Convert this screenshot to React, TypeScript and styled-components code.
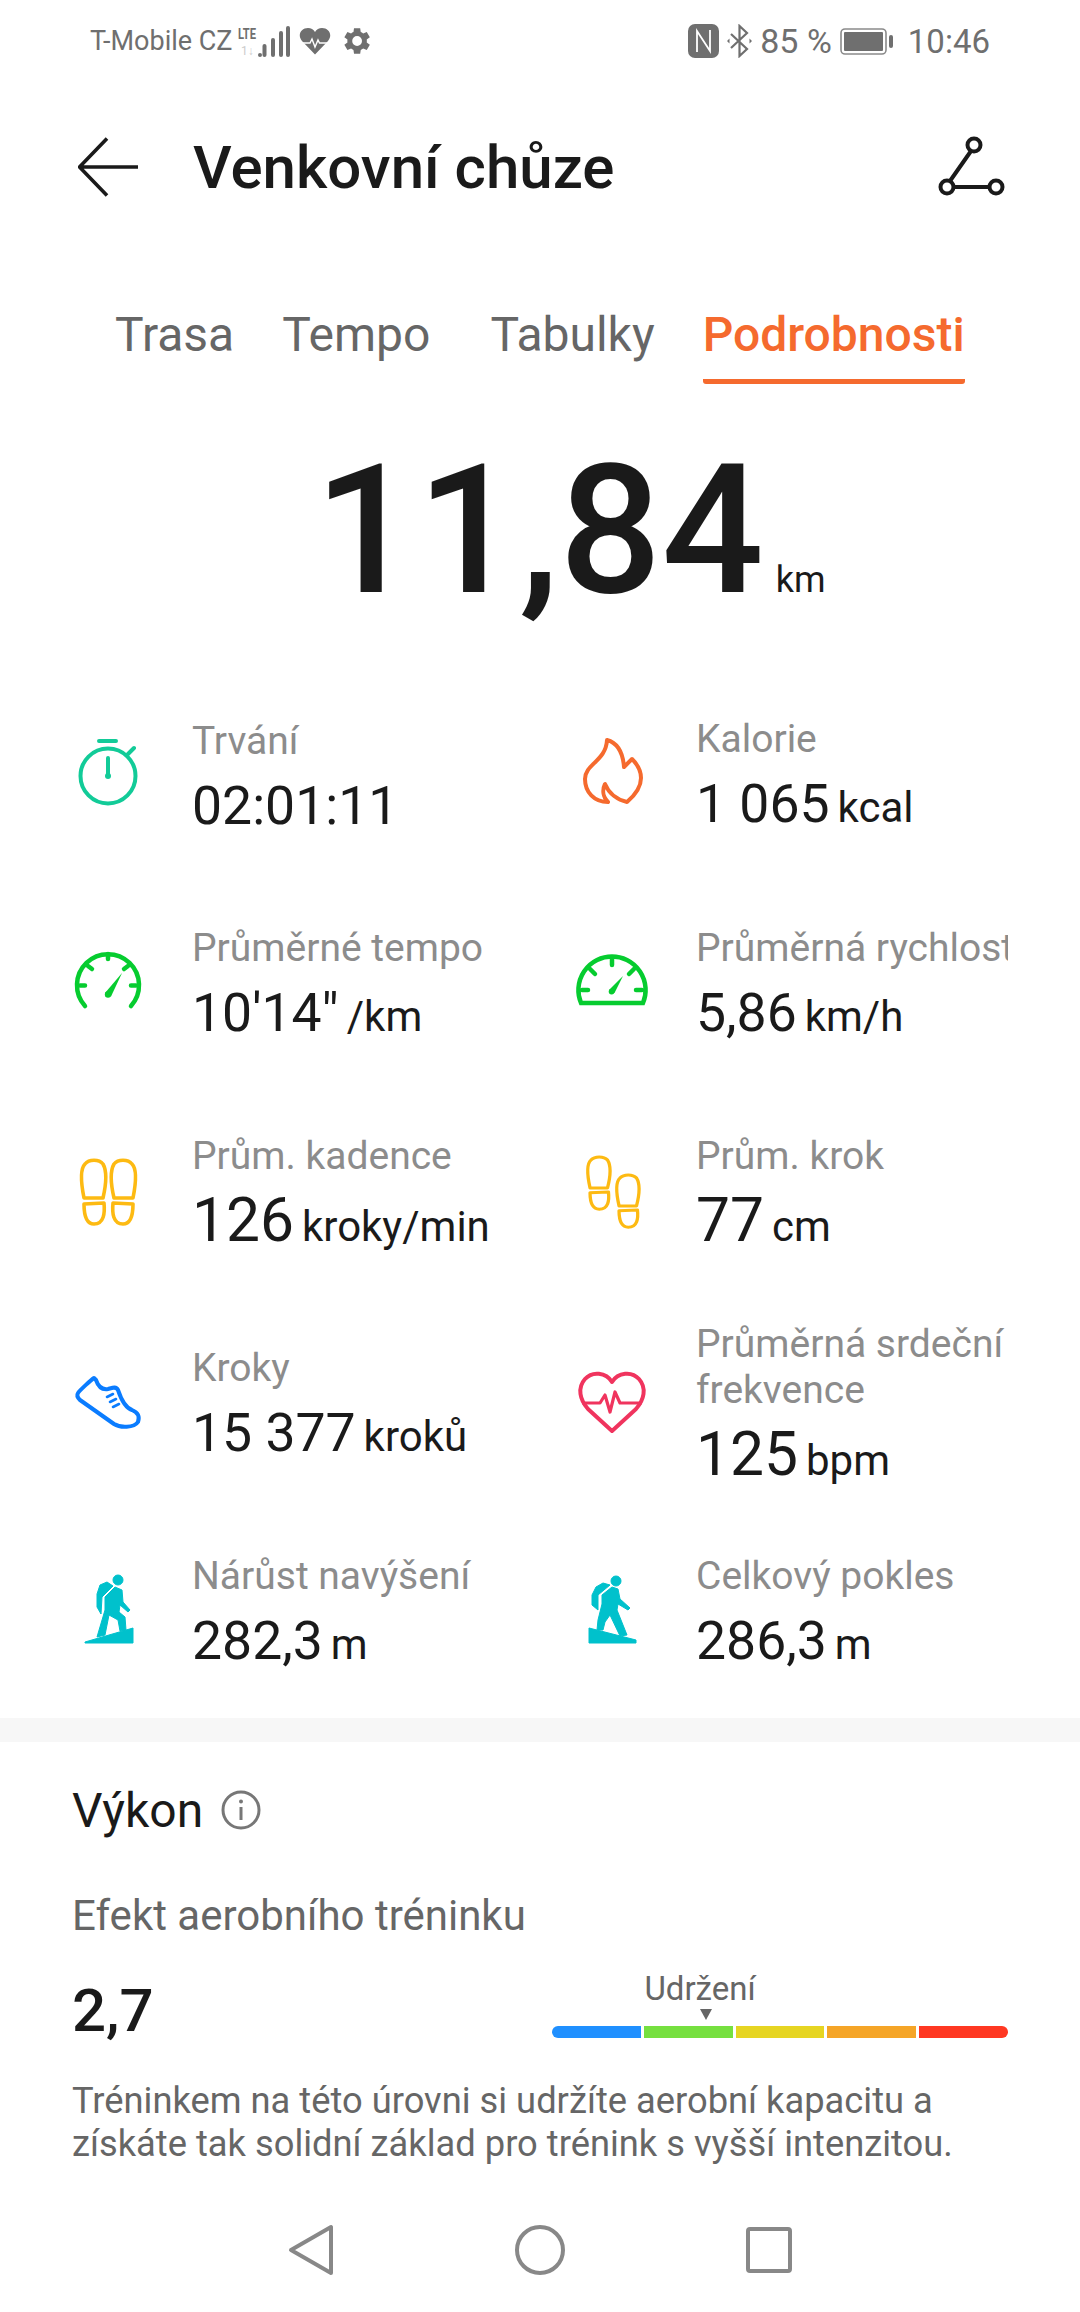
import React from 'react';
import styled, { createGlobalStyle } from 'styled-components';

const GlobalStyle = createGlobalStyle`
  html, body {
    margin: 0;
    padding: 0;
    background: #fff;
  }
  body {
    font-family: Roboto, "Noto Sans", sans-serif;
    color: #1a1a1a;
  }
`;

const ORANGE = '#f56a2e';
const TEAL = '#12cb98';
const GREEN = '#06cc2f';
const YELLOW = '#fdba12';
const BLUE = '#0a7cff';
const RED = '#f0345e';
const CYAN = '#00c1cc';

const Stopwatch = () => (
  <IconSvg viewBox="0 0 72 72" fill="none" stroke={TEAL} strokeWidth={4} strokeLinecap="round">
    <circle cx={36} cy={42} r={27.5} />
    <path d="M27 7h17M36 24v18M56 20l6-6" />
    <circle cx={36} cy={42} r={3} fill={TEAL} stroke="none" />
  </IconSvg>
);

const Flame = () => (
  <IconSvg viewBox="0 0 72 72" fill="none" stroke={ORANGE} strokeWidth={4} strokeLinejoin="round">
    <path d="M31 6C42 9 47 20 48 33L56 25C62 31 65 37 65 44C65 54 58 62 51 68C42 66 33 60 29 50C26 56 27 63 32 68C18 68 9 58 9 45C9 30 30 27 31 6Z" />
  </IconSvg>
);

const PaceGauge = () => (
  <IconSvg viewBox="0 0 72 72" fill="none" stroke={GREEN} strokeWidth={4.5} strokeLinecap="round">
    <path d="M13 63A31 31 0 1 1 59 63" />
    <path d="M36 11v5M8 42.500h5M59 42.500h5M16 23l4 3M56 23l-4 3" />
    <path d="M50 30L39 53.500L33 50Z" fill={GREEN} stroke="none" />
    <circle cx={36} cy={51.500} r={3.2} fill={GREEN} stroke="none" />
  </IconSvg>
);

const SpeedGauge = () => (
  <IconSvg viewBox="0 0 72 72" fill="none" stroke={GREEN} strokeWidth={4.5} strokeLinecap="round">
    <path d="M5 60A33.600 33.600 0 1 1 67 60Z" strokeLinecap="butt" />
    <path d="M36 15v7M14 26l5 5M58 26l-5 5M6 47h6M60 47h6" />
    <path d="M47 33L38.500 50L33 47Z" fill={GREEN} stroke="none" />
    <circle cx={35.600} cy={48.600} r={2.9} fill={GREEN} stroke="none" />
  </IconSvg>
);

const Foot = ({ transform }: { transform: string }) => (
  <g transform={transform}>
    <path d="M12 45C9 30 8 16 13 11C17 6 27 6 31 11C35 18 34 32 31 45Z" />
    <path d="M12 51L32 50C33 60 32 71 22 71C14 71 12 62 12 51Z" />
  </g>
);

const FeetTogether = () => (
  <IconSvg viewBox="0 0 72 72" fill="none" stroke={YELLOW} strokeWidth={3.6} strokeLinejoin="round">
    <Foot transform="" />
    <Foot transform="translate(73 0) scale(-1 1)" />
  </IconSvg>
);

const FeetStride = () => (
  <IconSvg viewBox="0 0 72 72" fill="none" stroke={YELLOW} strokeWidth={3.6} strokeLinejoin="round">
    <Foot transform="translate(3 -2) scale(.92 .82)" />
    <Foot transform="translate(32 16) scale(.92 .82)" />
  </IconSvg>
);

const Shoe = () => (
  <IconSvg viewBox="0 0 72 72" fill="none" stroke={BLUE} strokeWidth={4} strokeLinejoin="round" strokeLinecap="round">
    <path d="M22 14C19 16 8 26 6 29C4 32 6 34 8 36L42 60C48 64 62 64 66 58C68 52 65 48 60 46C54 44 50 38 46 26C44 22 40 24 36 25C30 26 26 22 24 16Z" />
    <path d="M35 33l6-3M38 38l6-3M41 43l6-3" strokeWidth={2.6} />
  </IconSvg>
);

const HeartRate = () => (
  <IconSvg viewBox="0 0 72 72" fill="none" stroke={RED} strokeWidth={4} strokeLinejoin="round">
    <path d="M36 18C30 8 16 7 9 15C1 24 4 36 12 45L36 67L60 45C68 36 71 24 63 15C56 7 42 8 36 18Z" />
    <path d="M6 39H24L29 31L34 48L39 28L44 39H66" strokeWidth={3.2} />
  </IconSvg>
);

const HikerUp = () => (
  <IconSvg viewBox="0 0 72 72" fill={CYAN} stroke={CYAN} strokeWidth={1} strokeLinejoin="round">
    <circle cx={46} cy={8} r={5} />
    <path d="M35 10L41 14L30 25L29 42L25 35L25 22L28 13Z" />
    <path d="M33 25L43 15L50 18L51 30L58 38L56 40L48 33L47 40L53 45L54 58L48 59L46 48L37 43L33 63L25 65L33 38Z" />
    <path d="M13 70L61 56V71H13Z" />
  </IconSvg>
);

const HikerDown = () => (
  <IconSvg viewBox="0 0 72 72" fill={CYAN} stroke={CYAN} strokeWidth={1} strokeLinejoin="round">
    <circle cx={40} cy={9} r={5} />
    <path d="M27 11L34 13L22 23L22 38L16 33L16 23L20 15Z" />
    <path d="M26 23L36 15L42 17L44 27L54 36L52 38L42 32L41 38L51 63L44 64L34 43L29 50L27 58L21 58L22 48L26 32Z" />
    <path d="M13 56L60 68V71H13Z" />
  </IconSvg>
);

const stats = [
  { Icon: Stopwatch, label: 'Trvání', value: '02:01:11' },
  { Icon: Flame, label: 'Kalorie', value: '1 065', unit: 'kcal' },
  { Icon: PaceGauge, label: 'Průměrné tempo', value: "10'14\"", unit: '/km' },
  { Icon: SpeedGauge, label: 'Průměrná rychlost', value: '5,86', unit: 'km/h', clip: true },
  { Icon: FeetTogether, label: 'Prům. kadence', value: '126', unit: 'kroky/min', large: true },
  { Icon: FeetStride, label: 'Prům. krok', value: '77', unit: 'cm', large: true },
  { Icon: Shoe, label: 'Kroky', value: '15 377', unit: 'kroků' },
  { Icon: HeartRate, label: 'Průměrná srdeční frekvence', value: '125', unit: 'bpm', large: true },
  { Icon: HikerUp, label: 'Nárůst navýšení', value: '282,3', unit: 'm' },
  { Icon: HikerDown, label: 'Celkový pokles', value: '286,3', unit: 'm' },
];

const scale = ['#2090ff', '#76e040', '#e6d522', '#f5a527', '#ff3822'];

const App = () => (
  <Page>
    <GlobalStyle />
    <StatusBar>
      <StatusGroup>
        <Carrier>T-Mobile CZ</Carrier>
        <SignalSvg width="54" height="31" viewBox="0 0 54 31" fill="#6f6f6f">
          <text x="1" y="13" fontSize="15" fontFamily="Roboto" fontWeight="700" textLength="18" lengthAdjust="spacingAndGlyphs">LTE</text>
          <text x="4" y="29" fontSize="12" fontFamily="Roboto" fill="#ccc">1↓</text>
          <rect x="21" y="27" width="4" height="4" rx="2" />
          <rect x="25.500" y="18" width="4" height="13" rx="2" />
          <rect x="34" y="12" width="4" height="19" rx="2" />
          <rect x="42" y="5" width="4" height="26" rx="2" />
          <rect x="49" y="0" width="4" height="31" rx="2" />
        </SignalSvg>
        <svg width="32" height="28" viewBox="0 0 32 28">
          <path d="M16 27.500L3 14C-2 8 2 1 9 1C12 1 14.500 2.500 16 5C17.500 2.500 20 1 23 1C30 1 34 8 29 14Z" fill="#6f6f6f" />
          <path d="M3 16H11L13 12L16 20L19 13L20.500 16H29" fill="none" stroke="#fff" strokeWidth={1.4} />
        </svg>
        <svg width="32" height="28" viewBox="0 2 22 20" fill="#6f6f6f">
          <path d="M19.400 13a7.600 7.600 0 0 0 0-2l2.200-1.700-2.200-3.700-2.600 1a7.500 7.500 0 0 0-1.700-1L14.700 2.900h-4.400l-.4 2.700a7.500 7.500 0 0 0-1.700 1l-2.600-1-2.200 3.700L5.600 11a7.600 7.600 0 0 0 0 2l-2.200 1.700 2.200 3.700 2.600-1a7.500 7.500 0 0 0 1.700 1l.4 2.700h4.400l.4-2.700a7.500 7.500 0 0 0 1.700-1l2.600 1 2.200-3.700ZM12.500 15.500a3.500 3.500 0 1 1 0-7 3.500 3.500 0 0 1 0 7Z" fillRule="evenodd" />
        </svg>
      </StatusGroup>
      <StatusGroup>
        <svg width="31" height="34" viewBox="0 0 31 34">
          <rect x="0" y="0" width="31" height="34" rx="7" fill="#6f6f6f" />
          <path d="M9 28V7L22 27V6" fill="none" stroke="#fff" strokeWidth={1.8} />
        </svg>
        <svg width="25" height="34" viewBox="0 0 25 34" fill="none" stroke="#6f6f6f" strokeWidth={2.2}>
          <path d="M4 10L20 25L12.500 32V2L20 9L4 24" />
          <path d="M0 17l2.500-2.500v5ZM25 17l-2.500-2.500v5Z" fill="#6f6f6f" stroke="none" />
        </svg>
        <StatusText>85 %</StatusText>
        <svg width="53" height="27" viewBox="0 0 53 27">
          <rect x="1" y="1" width="45" height="25" rx="4" fill="none" stroke="#8a8a8a" strokeWidth={1.6} />
          <rect x="4" y="4" width="39" height="19" rx="1" fill="#6f6f6f" />
          <rect x="49" y="7" width="4" height="13" rx="2" fill="#6f6f6f" />
        </svg>
        <Clock>10:46</Clock>
      </StatusGroup>
    </StatusBar>

    <Header>
      <svg width="60" height="60" viewBox="0 0 60 60" fill="none" stroke="#1a1a1a" strokeWidth={3.6}>
        <path d="M29 1.500L1.500 30L29 58.500M2 30H60" />
      </svg>
      <Title>Venkovní chůze</Title>
      <svg width="67" height="62" viewBox="0 0 67 62" fill="none" stroke="#1a1a1a" strokeWidth={4}>
        <circle cx={36} cy={9} r={6.500} />
        <circle cx={9} cy={51} r={6.500} />
        <circle cx={58} cy={51} r={6.500} />
        <path d="M33 15L12 45M15.500 51H51.500" />
      </svg>
    </Header>

    <Tabs>
      <Tab>Trasa</Tab>
      <Tab>Tempo</Tab>
      <Tab $lead={12}>Tabulky</Tab>
      <Tab $active>Podrobnosti</Tab>
    </Tabs>

    <Distance>
      <BigNumber>11,84</BigNumber>
      <BigUnit>km</BigUnit>
    </Distance>

    <StatGrid>
      {stats.map(({ Icon, label, value, unit, clip, large }) => (
        <Stat key={label}>
          <IconBox>
            <Icon />
          </IconBox>
          <StatText>
            <StatLabel $clip={clip}>{label}</StatLabel>
            <StatValue $large={large}>
              {value}
              {unit && <StatUnit>{unit}</StatUnit>}
            </StatValue>
          </StatText>
        </Stat>
      ))}
    </StatGrid>

    <Divider />

    <Performance>
      <SectionTitle>
        Výkon
        <svg width="40" height="40" viewBox="0 0 40 40" fill="none" stroke="#777" strokeWidth={3}>
          <circle cx={20} cy={20} r={18} />
          <path d="M20 17V30" />
          <circle cx={20} cy={11.500} r={2} fill="#777" stroke="none" />
        </svg>
      </SectionTitle>
      <SectionSub>Efekt aerobního tréninku</SectionSub>
      <ScoreRow>
        <Score>2,7</Score>
        <Scale>
          <ScaleLabel>Udržení</ScaleLabel>
          <ScaleMarker />
          <ScaleBar>
            {scale.map((c) => (
              <ScaleStep key={c} $color={c} />
            ))}
          </ScaleBar>
        </Scale>
      </ScoreRow>
      <Description>
        Tréninkem na této úrovni si udržíte aerobní kapacitu a získáte tak solidní základ pro trénink s vyšší intenzitou.
      </Description>
    </Performance>

    <NavBar>
      <svg width="46" height="52" viewBox="0 0 46 52" fill="none" stroke="#888" strokeWidth={4} strokeLinejoin="round">
        <path d="M43 3V49L3 26Z" />
      </svg>
      <svg width="52" height="52" viewBox="0 0 52 52" fill="none" stroke="#888" strokeWidth={4}>
        <circle cx={26} cy={26} r={23} />
      </svg>
      <svg width="46" height="46" viewBox="0 0 46 46" fill="none" stroke="#888" strokeWidth={4} strokeLinejoin="round">
        <rect x="2" y="2" width="42" height="42" rx="2" />
      </svg>
    </NavBar>
  </Page>
);

const Page = styled.div`
  width: 1080px;
  height: 2312px;
  overflow: hidden;
  background: #fff;
`;
const StatusBar = styled.div`
  height: 82px;
  padding: 0 90px;
  display: flex;
  align-items: center;
  justify-content: space-between;
  color: #6f6f6f;
`;
const StatusGroup = styled.div`
  display: flex;
  align-items: center;
  gap: 8px;
`;
const Carrier = styled.span`
  margin-right: -4px;
  font-size: 27px;
`;
const SignalSvg = styled.svg`
  overflow: visible;
`;
const StatusText = styled.span`
  font-size: 34px;
`;
const Clock = styled.span`
  margin-left: 7px;
  font-size: 33px;
`;
const Header = styled.div`
  height: 170px;
  padding: 0 75px 0 78px;
  display: flex;
  align-items: center;
`;
const Title = styled.h1`
  flex: 1;
  margin: 0 0 0 55px;
  font-size: 60px;
  font-weight: 500;
  color: #1a1a1a;
`;
const Tabs = styled.div`
  height: 139px;
  padding: 0 115px;
  display: flex;
  align-items: flex-start;
  gap: 48px;
`;
const Tab = styled.div<{ $active?: boolean; $lead?: number }>`
  padding-top: 52px;
  height: 75px;
  margin-left: ${(p) => p.$lead ?? 0}px;
  font-size: 48px;
  line-height: 62px;
  border-bottom: ${(p) => (p.$active ? `5px solid ${ORANGE}` : 'none')};
  color: ${(p) => (p.$active ? ORANGE : '#666')};
  font-weight: ${(p) => (p.$active ? 500 : 400)};
  border-radius: 0 0 3px 3px;
`;
const Distance = styled.div`
  height: 252px;
  padding: 30px 0 0 60px;
  display: flex;
  align-items: baseline;
  justify-content: center;
`;
const BigNumber = styled.span`
  font-size: 180px;
  line-height: 220px;
  font-weight: 500;
  color: #1a1a1a;
`;
const BigUnit = styled.span`
  margin-left: 12px;
  font-size: 36px;
`;
const StatGrid = styled.div`
  padding: 0 72px;
  display: grid;
  grid-template-columns: 504px 432px;
  grid-template-rows: 210px 208px 211px 211px 205px;
`;
const Stat = styled.div`
  display: flex;
  align-items: center;
  gap: 48px;
  min-width: 0;
`;
const IconBox = styled.div`
  flex: none;
  width: 72px;
  height: 72px;
  margin-top: -16px;
`;
const IconSvg = styled.svg`
  display: block;
  width: 72px;
  height: 72px;
  overflow: visible;
`;
const StatText = styled.div`
  flex: 1;
  min-width: 0;
`;
const StatLabel = styled.div<{ $clip?: boolean }>`
  font-size: 39px;
  line-height: 46px;
  color: #8c8c8c;
  white-space: ${(p) => (p.$clip ? 'nowrap' : 'normal')};
  overflow: hidden;
`;
const StatValue = styled.div<{ $large?: boolean }>`
  margin-top: 9px;
  font-size: ${(p) => (p.$large ? 60.5 : 53.5)}px;
  line-height: 66px;
  color: #1a1a1a;
`;
const StatUnit = styled.span`
  margin-left: 8px;
  font-size: 42px;
`;
const Divider = styled.div`
  height: 24px;
  background: #f7f7f7;
`;
const Performance = styled.div`
  padding: 0 72px;
`;
const SectionTitle = styled.div`
  height: 90px;
  padding-top: 23px;
  display: flex;
  align-items: center;
  gap: 18px;
  font-size: 48px;
`;
const SectionSub = styled.div`
  margin-top: 36px;
  font-size: 42px;
  line-height: 50px;
  color: #666;
`;
const ScoreRow = styled.div`
  height: 138px;
  display: flex;
  align-items: center;
  justify-content: space-between;
`;
const Score = styled.div`
  font-size: 60px;
  font-weight: 500;
`;
const Scale = styled.div`
  width: 456px;
  margin-bottom: 12px;
  display: flex;
  flex-direction: column;
  align-items: center;
`;
const ScaleLabel = styled.div`
  margin-left: -160px;
  font-size: 33px;
  line-height: 36px;
  color: #666;
`;
const ScaleMarker = styled.div`
  margin: 2px 0 6px -148px;
  border-left: 6px solid transparent;
  border-right: 6px solid transparent;
  border-top: 11px solid #666;
`;
const ScaleBar = styled.div`
  width: 100%;
  height: 12px;
  display: flex;
  gap: 3px;
  border-radius: 6px;
  overflow: hidden;
`;
const ScaleStep = styled.div<{ $color: string }>`
  flex: 1;
  background: ${(p) => p.$color};
`;
const Description = styled.p`
  margin: 0;
  font-size: 36.3px;
  line-height: 43px;
  color: #666;
`;
const NavBar = styled.div`
  margin-top: 55px;
  height: 60px;
  padding: 0 288px;
  display: flex;
  align-items: center;
  justify-content: space-between;
`;

export default App;
